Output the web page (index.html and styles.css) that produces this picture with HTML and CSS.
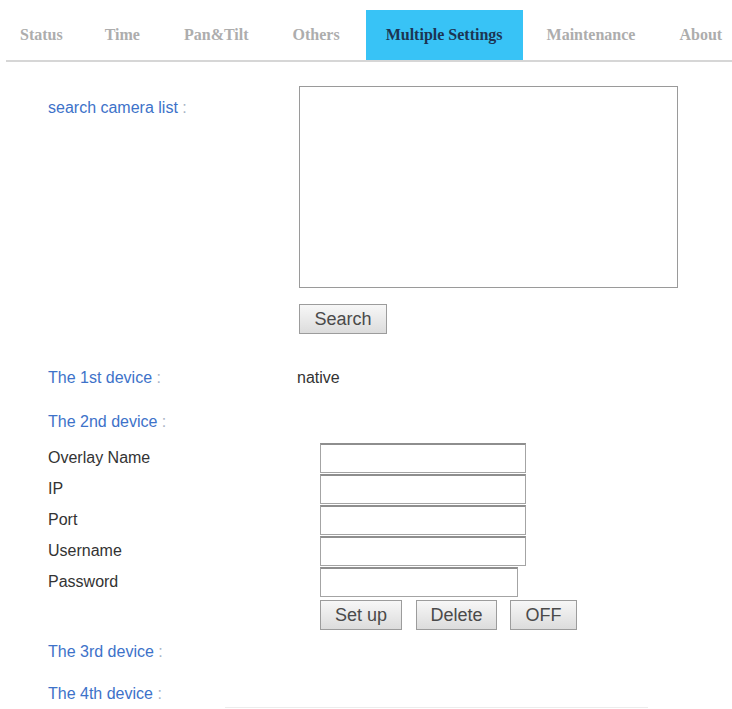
FILE: index.html
```html
<!DOCTYPE html>
<html lang="en">
<head>
    <meta charset="UTF-8">
    <title>Multiple Settings</title>
    <link rel="stylesheet" href="styles.css">
</head>
<body>

    <nav class="tabs">
        <ul>
            <li class="first">Status</li>
            <li>Time</li>
            <li>Pan&amp;Tilt</li>
            <li>Others</li>
            <li class="active">Multiple Settings</li>
            <li>Maintenance</li>
            <li>About</li>
        </ul>
    </nav>

    <section class="content">
        <div class="search-row">
            <div class="label title search-label">search camera list <span class="colon">:</span></div>
            <div class="search-box">
                <textarea class="camera-list"></textarea>
                <button class="btn btn-search">Search</button>
            </div>
        </div>

        <div class="device-row first-device">
            <div class="label title">The 1st device <span class="colon">:</span></div>
            <div class="device-value">native</div>
        </div>

        <div class="label title second-device">The 2nd device <span class="colon">:</span></div>

        <!-- 2nd device form -->
        <div class="device-form">
            <label for="overlayName">Overlay Name</label>
            <input type="text" id="overlayName">
            <label for="ip">IP</label>
            <input type="text" id="ip">
            <label for="port">Port</label>
            <input type="text" id="port">
            <label for="username">Username</label>
            <input type="text" id="username">
            <label for="password">Password</label>
            <input type="password" id="password" class="short">
            <div></div>
            <div class="actions">
                <button class="btn btn-setup">Set up</button>
                <button class="btn btn-delete">Delete</button>
                <button class="btn btn-off">OFF</button>
            </div>
        </div>

        <div class="label title third-device">The 3rd device <span class="colon">:</span></div>
        <div class="label title fourth-device">The 4th device <span class="colon">:</span></div>
    </section>

    <div class="footer-line"></div>

</body>
</html>
```

FILE: styles.css
```css
/* General */
body {
    margin: 0;
    background: #fff;
    font-family: "Liberation Sans", Arial, sans-serif;
    font-size: 16px;
    color: #333;
    overflow: hidden;
}

/* Tabs */
.tabs {
    padding-top: 10px;
    margin-left: 6px;
    border-bottom: 2px solid #d6d6d6;
    overflow: hidden;
}

.tabs ul {
    list-style: none;
    display: flex;
    margin: 0;
    padding: 0;
}

.tabs li {
    flex-shrink: 0;
    white-space: nowrap;
    font-family: "Liberation Serif", "Times New Roman", serif;
    font-weight: bold;
    font-size: 16px;
    line-height: 50px;
    padding: 0 22px;
    color: #adadad;
}

.tabs li.first {
    padding-left: 14px;
    padding-right: 20px;
}

.tabs li.active {
    background: #38c3f6;
    color: #1c3553;
    padding: 0 20px;
    margin-left: 4px;
    margin-right: 2px;
}

/* Content */
.content {
    padding: 24px 0 0 48px;
}

.label {
    line-height: 20px;
}

.title {
    color: #3d72c9;
}

.colon {
    color: #a9b4c6;
}

.search-row {
    display: grid;
    grid-template-columns: 251px 1fr;
}

.search-label {
    padding-top: 12px;
}

.camera-list {
    display: block;
    width: 379px;
    height: 202px;
    box-sizing: border-box;
    margin: 0;
    border: 1px solid #9a9a9a;
    resize: none;
}

.btn {
    font-family: "Liberation Sans", Arial, sans-serif;
    font-size: 18px;
    color: #4a4a4a;
    height: 30px;
    padding: 0;
    border: 1px solid #9c9c9c;
    border-radius: 0;
    background: linear-gradient(#f7f7f7, #dcdcdc);
    box-sizing: border-box;
}

.btn-search {
    display: block;
    margin-top: 16px;
    width: 88px;
}

.device-row {
    display: grid;
    grid-template-columns: 249px 1fr;
    line-height: 20px;
}

.first-device {
    margin-top: 34px;
}

.second-device {
    margin-top: 24px;
}

/* Device form */
.device-form {
    display: grid;
    grid-template-columns: 272px 1fr;
    row-gap: 1px;
    margin-top: 11px;
}

.device-form label {
    line-height: 30px;
    color: #333;
}

.device-form input {
    width: 206px;
    height: 30px;
    margin: 0;
    box-sizing: border-box;
    border: 1px solid #a4a4a4;
    border-top: 2px solid #8e8e8e;
    font-size: 15px;
}

.device-form input.short {
    width: 198px;
}

.actions {
    display: flex;
    margin-top: 2px;
}

.btn-setup {
    width: 82px;
}

.btn-delete {
    width: 81px;
    margin-left: 14px;
}

.btn-off {
    width: 67px;
    margin-left: 13px;
}

.third-device {
    margin-top: 12px;
}

.fourth-device {
    margin-top: 22px;
}

.footer-line {
    margin: 3px 0 0 225px;
    width: 423px;
    border-top: 1px solid #ececec;
}
```
